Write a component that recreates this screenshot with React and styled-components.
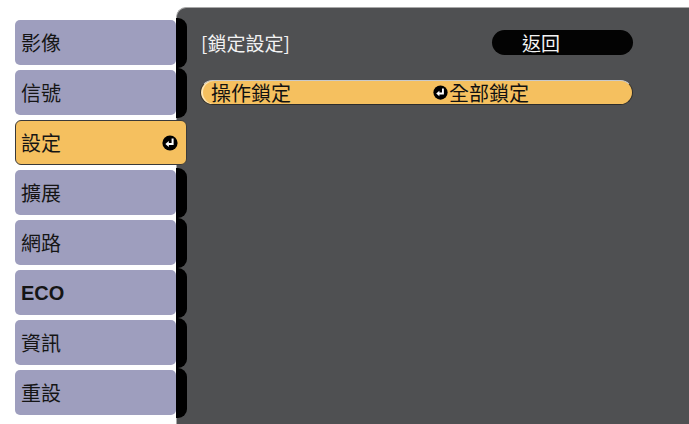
import React from "react";
import styled, { createGlobalStyle } from "styled-components";

const Global = createGlobalStyle`
  html, body { margin: 0; padding: 0; background: #ffffff; }
  body { font-family: "Noto Sans CJK TC", "Noto Sans", sans-serif; }
`;

const Screen = styled.div`
  display: flex;
  width: 689px;
  height: 424px;
  overflow: hidden;
  background: #ffffff;
`;

const Sidebar = styled.nav`
  position: relative;
  z-index: 1;
  width: 161px;
  flex: none;
  padding: 20px 0 0 15px;
  display: flex;
  flex-direction: column;
  gap: 5px;
`;

const MenuItem = styled.div`
  position: relative;
  height: 45px;
  box-sizing: border-box;
  display: flex;
  align-items: center;
  justify-content: space-between;
  padding: 0 8px 0 6px;
  font-family: ${(p) => (p.$latin ? '"Liberation Sans", Arial, sans-serif' : '"Noto Sans CJK TC", sans-serif')};
  font-weight: ${(p) => (p.$latin ? 700 : 400)};
  font-size: 20px;
  line-height: 1;
  color: #151515;
  background: ${(p) => (p.$active ? "#f5c05f" : "#9e9ebe")};
  border-radius: ${(p) => (p.$active ? "6px" : "5px")};
  border: ${(p) => (p.$active ? "1px solid #3a3a3a" : "none")};
  margin-right: ${(p) => (p.$active ? "-11px" : "0")};
  padding-left: ${(p) => (p.$active ? "5px" : "6px")};

  ${(p) =>
    !p.$active &&
    `
    &::after {
      content: "";
      position: absolute;
      left: 100%;
      top: -2px;
      width: 11px;
      height: 50px;
      background: #000;
      border-radius: 0 9px 9px 0;
    }
  `}
`;

const Panel = styled.main`
  flex: 1;
  margin-top: 7px;
  box-sizing: border-box;
  background: #4f5052;
  border-top: 1px solid #a8a8a8;
  border-left: 1px solid #a8a8a8;
  border-top-left-radius: 10px;
  padding: 22px 56px 0 23px;
  display: flex;
  flex-direction: column;
  gap: 25px;
`;

const HeaderRow = styled.div`
  height: 25px;
  display: flex;
  align-items: center;
  justify-content: space-between;
`;

const Title = styled.div`
  color: #f2f2f2;
  font-size: 19px;
  line-height: 1;
  padding-left: 1px;
`;

const BackButton = styled.div`
  width: 141px;
  height: 25px;
  box-sizing: border-box;
  background: #030303;
  border-radius: 13px;
  color: #f4f4f4;
  font-size: 19px;
  line-height: 25px;
  padding-left: 30px;
`;

const OptionRow = styled.div`
  height: 25px;
  box-sizing: border-box;
  display: grid;
  grid-template-columns: 222px 1fr;
  align-items: center;
  background: #f5c05f;
  border: 1px solid #2c2c2c;
  border-top-color: #c9c9c9;
  border-radius: 13px;
  box-shadow: inset 2px 0 0 #fde6b6;
  padding-left: 10px;
  color: #111;
  font-size: 20px;
  line-height: 1;
`;

const Value = styled.span`
  display: flex;
  align-items: center;
  gap: 1px;
`;

const EnterIcon = ({ size = 15 }) => (
  <svg width={size} height={size} viewBox="0 0 16 16" style={{ flex: "none" }}>
    <circle cx="8" cy="8" r="7.6" fill="#000" />
    <path d="M10.6 3.6 V9 H6.2" fill="none" stroke="#fff" strokeWidth="2" />
    <path d="M3.4 9 L6.8 6.1 L6.8 11.9 Z" fill="#fff" />
  </svg>
);

const menu = [
  { label: "影像" },
  { label: "信號" },
  { label: "設定", active: true },
  { label: "擴展" },
  { label: "網路" },
  { label: "ECO", latin: true },
  { label: "資訊" },
  { label: "重設" },
];

export default function App() {
  return (
    <>
      <Global />
      <Screen>
        <Sidebar>
          {menu.map((m) => (
            <MenuItem key={m.label} $active={m.active} $latin={m.latin}>
              <span>{m.label}</span>
              {m.active && <EnterIcon size={16} />}
            </MenuItem>
          ))}
        </Sidebar>
        <Panel>
          <HeaderRow>
            <Title>[鎖定設定]</Title>
            <BackButton>返回</BackButton>
          </HeaderRow>
          <OptionRow>
            <span>操作鎖定</span>
            <Value>
              <EnterIcon size={15} />
              全部鎖定
            </Value>
          </OptionRow>
        </Panel>
      </Screen>
    </>
  );
}
